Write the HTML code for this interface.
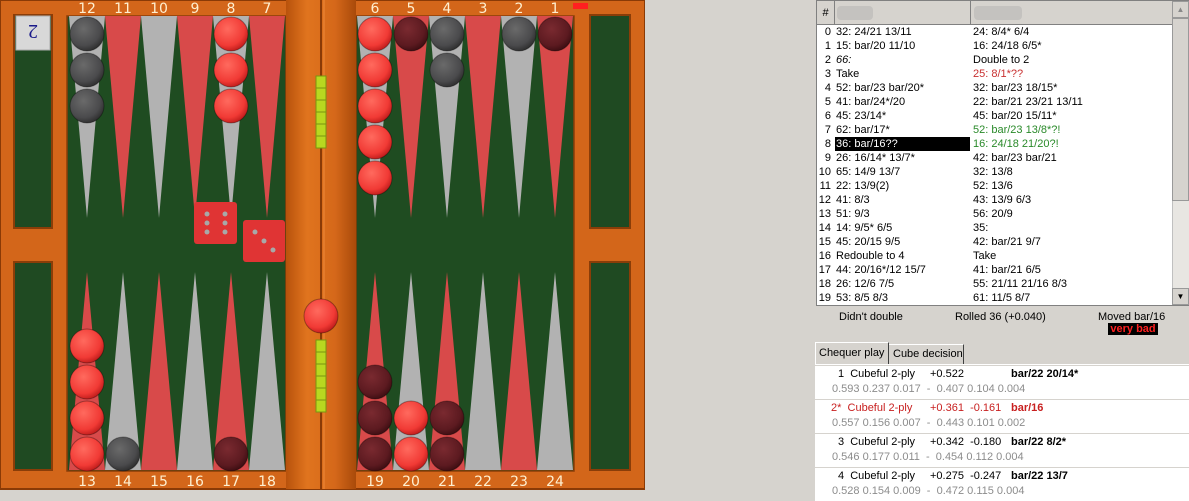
<!DOCTYPE html>
<html><head><meta charset="utf-8"><style>
body{margin:0;width:1189px;height:496px;background:#d6d3ce;position:relative;overflow:hidden;font-family:"Liberation Sans",Tahoma,sans-serif;font-size:11px;color:#000}
.abs{position:absolute}
#list{left:816px;top:0;width:373px;height:306px;background:#fff;border:1px solid #808080;box-sizing:border-box}
.hdr{position:absolute;top:0;height:24px;background:#d6d3ce;border-right:1px solid #808080;border-bottom:1px solid #808080;box-sizing:border-box}
.row{position:absolute;height:14px;line-height:14px;white-space:nowrap;width:356px}
.row .n{position:absolute;left:0;width:15px;text-align:right}
.blur{position:absolute;top:5px;height:14px;background:#c4c2bf;border-radius:4px}
.ar{position:absolute;left:0;width:100%;height:33px;background:#fff}
.l{position:absolute;white-space:nowrap;line-height:13px}
.g{color:#8c8c8c}
</style></head><body>
<svg class="abs" style="left:0;top:0" width="645" height="496" viewBox="0 0 645 496">
<defs>
<radialGradient id="rc" cx="0.4" cy="0.35" r="0.7"><stop offset="0" stop-color="#ff6a5e"/><stop offset="0.7" stop-color="#f13a35"/><stop offset="1" stop-color="#b81818"/></radialGradient>
<radialGradient id="gc" cx="0.4" cy="0.35" r="0.7"><stop offset="0" stop-color="#6a6a6a"/><stop offset="0.7" stop-color="#4a4a4c"/><stop offset="1" stop-color="#2a2a2a"/></radialGradient>
<radialGradient id="dc" cx="0.4" cy="0.35" r="0.7"><stop offset="0" stop-color="#7a2a30"/><stop offset="0.7" stop-color="#5c1a20"/><stop offset="1" stop-color="#380c10"/></radialGradient>
<linearGradient id="wood" x1="0" y1="0" x2="1" y2="0"><stop offset="0" stop-color="#b8520c"/><stop offset="0.3" stop-color="#e0741e"/><stop offset="0.7" stop-color="#d5681a"/><stop offset="1" stop-color="#a94a0a"/></linearGradient>
</defs>
<rect x="0" y="0" width="645" height="489" fill="#d3661a"/>
<rect x="0" y="0" width="645" height="489" fill="none" stroke="#8a3a06" stroke-width="2"/>
<rect x="14" y="15" width="38" height="213" fill="#1f4a22" stroke="#8a3d08" stroke-width="2"/>
<rect x="14" y="262" width="38" height="208" fill="#1f4a22" stroke="#8a3d08" stroke-width="2"/>
<rect x="590" y="15" width="40" height="213" fill="#1f4a22" stroke="#8a3d08" stroke-width="2"/>
<rect x="590" y="262" width="40" height="208" fill="#1f4a22" stroke="#8a3d08" stroke-width="2"/>
<rect x="67" y="16" width="219" height="455" fill="#1f4c21" stroke="#8a3d08" stroke-width="1.5"/>
<rect x="356" y="16" width="218" height="455" fill="#1f4c21" stroke="#8a3d08" stroke-width="1.5"/>
<rect x="286" y="0" width="70" height="489" fill="url(#wood)"/>
<line x1="321" y1="0" x2="321" y2="489" stroke="#8a3a06" stroke-width="2"/>
<line x1="324" y1="0" x2="324" y2="489" stroke="#f08a3a" stroke-width="1"/>
<rect x="316" y="76" width="10" height="72" fill="#b8d820" stroke="#7a9410"/>
<rect x="316" y="340" width="10" height="72" fill="#b8d820" stroke="#7a9410"/>
<g stroke="#7a9410"><line x1="316" y1="88" x2="326" y2="88"/><line x1="316" y1="100" x2="326" y2="100"/><line x1="316" y1="112" x2="326" y2="112"/><line x1="316" y1="124" x2="326" y2="124"/><line x1="316" y1="136" x2="326" y2="136"/><line x1="316" y1="352" x2="326" y2="352"/><line x1="316" y1="364" x2="326" y2="364"/><line x1="316" y1="376" x2="326" y2="376"/><line x1="316" y1="388" x2="326" y2="388"/><line x1="316" y1="400" x2="326" y2="400"/></g>
<g>
<polygon points="69,16 105,16 87,218" fill="#b2b2b2"/>
<polygon points="105,16 141,16 123,218" fill="#d84a4a"/>
<polygon points="141,16 177,16 159,218" fill="#b2b2b2"/>
<polygon points="177,16 213,16 195,218" fill="#d84a4a"/>
<polygon points="213,16 249,16 231,218" fill="#b2b2b2"/>
<polygon points="249,16 285,16 267,218" fill="#d84a4a"/>
<polygon points="357,16 393,16 375,218" fill="#b2b2b2"/>
<polygon points="393,16 429,16 411,218" fill="#d84a4a"/>
<polygon points="429,16 465,16 447,218" fill="#b2b2b2"/>
<polygon points="465,16 501,16 483,218" fill="#d84a4a"/>
<polygon points="501,16 537,16 519,218" fill="#b2b2b2"/>
<polygon points="537,16 573,16 555,218" fill="#d84a4a"/>
<polygon points="69,470 105,470 87,272" fill="#d84a4a"/>
<polygon points="105,470 141,470 123,272" fill="#b2b2b2"/>
<polygon points="141,470 177,470 159,272" fill="#d84a4a"/>
<polygon points="177,470 213,470 195,272" fill="#b2b2b2"/>
<polygon points="213,470 249,470 231,272" fill="#d84a4a"/>
<polygon points="249,470 285,470 267,272" fill="#b2b2b2"/>
<polygon points="357,470 393,470 375,272" fill="#d84a4a"/>
<polygon points="393,470 429,470 411,272" fill="#b2b2b2"/>
<polygon points="429,470 465,470 447,272" fill="#d84a4a"/>
<polygon points="465,470 501,470 483,272" fill="#b2b2b2"/>
<polygon points="501,470 537,470 519,272" fill="#d84a4a"/>
<polygon points="537,470 573,470 555,272" fill="#b2b2b2"/>
</g>
<rect x="573" y="3" width="15" height="6" fill="#ff2020"/>
<rect x="16" y="16" width="34" height="34" fill="#d8d8d8" stroke="#aaa"/>
<text x="33" y="41" font-size="20" fill="#1a1a8a" text-anchor="middle" transform="rotate(180 33 33)" font-family="Liberation Serif,serif">2</text>
<g stroke="#00000055" stroke-width="1">
<circle cx="87" cy="34" r="17" fill="url(#gc)"/><circle cx="87" cy="70" r="17" fill="url(#gc)"/><circle cx="87" cy="106" r="17" fill="url(#gc)"/>
<circle cx="231" cy="34" r="17" fill="url(#rc)"/><circle cx="231" cy="70" r="17" fill="url(#rc)"/><circle cx="231" cy="106" r="17" fill="url(#rc)"/>
<circle cx="375" cy="34" r="17" fill="url(#rc)"/><circle cx="375" cy="70" r="17" fill="url(#rc)"/><circle cx="375" cy="106" r="17" fill="url(#rc)"/><circle cx="375" cy="142" r="17" fill="url(#rc)"/><circle cx="375" cy="178" r="17" fill="url(#rc)"/>
<circle cx="411" cy="34" r="17" fill="url(#dc)"/>
<circle cx="447" cy="34" r="17" fill="url(#gc)"/><circle cx="447" cy="70" r="17" fill="url(#gc)"/>
<circle cx="519" cy="34" r="17" fill="url(#gc)"/>
<circle cx="555" cy="34" r="17" fill="url(#dc)"/>
<circle cx="87" cy="454" r="17" fill="url(#rc)"/><circle cx="87" cy="418" r="17" fill="url(#rc)"/><circle cx="87" cy="382" r="17" fill="url(#rc)"/><circle cx="87" cy="346" r="17" fill="url(#rc)"/>
<circle cx="123" cy="454" r="17" fill="url(#gc)"/>
<circle cx="231" cy="454" r="17" fill="url(#dc)"/>
<circle cx="375" cy="454" r="17" fill="url(#dc)"/><circle cx="375" cy="418" r="17" fill="url(#dc)"/><circle cx="375" cy="382" r="17" fill="url(#dc)"/>
<circle cx="411" cy="454" r="17" fill="url(#rc)"/><circle cx="411" cy="418" r="17" fill="url(#rc)"/>
<circle cx="447" cy="454" r="17" fill="url(#dc)"/><circle cx="447" cy="418" r="17" fill="url(#dc)"/>
<circle cx="321" cy="316" r="17" fill="url(#rc)"/>
</g>
<rect x="194" y="202" width="43" height="42" fill="#e03434" rx="3"/>
<g fill="#a8a8a8"><circle cx="207" cy="214" r="2.5"/><circle cx="225" cy="214" r="2.5"/><circle cx="207" cy="223" r="2.5"/><circle cx="225" cy="223" r="2.5"/><circle cx="207" cy="232" r="2.5"/><circle cx="225" cy="232" r="2.5"/></g>
<rect x="243" y="220" width="42" height="42" fill="#e03434" rx="3"/>
<g fill="#a8a8a8"><circle cx="255" cy="232" r="2.5"/><circle cx="264" cy="241" r="2.5"/><circle cx="273" cy="250" r="2.5"/></g>
<g fill="#fff0d0" font-size="14" text-anchor="middle" font-family="DejaVu Sans,sans-serif">
<text x="87" y="13">12</text><text x="123" y="13">11</text><text x="159" y="13">10</text><text x="195" y="13">9</text><text x="231" y="13">8</text><text x="267" y="13">7</text>
<text x="375" y="13">6</text><text x="411" y="13">5</text><text x="447" y="13">4</text><text x="483" y="13">3</text><text x="519" y="13">2</text><text x="555" y="13">1</text>
<text x="87" y="486">13</text><text x="123" y="486">14</text><text x="159" y="486">15</text><text x="195" y="486">16</text><text x="231" y="486">17</text><text x="267" y="486">18</text>
<text x="375" y="486">19</text><text x="411" y="486">20</text><text x="447" y="486">21</text><text x="483" y="486">22</text><text x="519" y="486">23</text><text x="555" y="486">24</text>
</g>
</svg>

<div id="list" class="abs">
 <div class="hdr" style="left:0;width:18px;text-align:center;line-height:24px">#</div>
 <div class="hdr" style="left:18px;width:136px"><div class="blur" style="left:2px;width:36px"></div></div>
 <div class="hdr" style="left:154px;width:202px"><div class="blur" style="left:3px;width:48px"></div></div>
 <div class="abs" style="left:355px;top:0;width:17px;height:304px;background:#e8e6e2;border-left:1px solid #c0c0c0"></div>
 <div class="abs" style="left:355px;top:0;width:17px;height:17px;background:#d6d3ce;border:1px solid #999;box-sizing:border-box;font-size:8px;text-align:center;line-height:15px;color:#888">▲</div>
 <div class="abs" style="left:355px;top:17px;width:17px;height:183px;background:#d6d3ce;border:1px solid #999;box-sizing:border-box"></div>
 <div class="abs" style="left:355px;top:287px;width:17px;height:17px;background:#d6d3ce;border:1px solid #999;box-sizing:border-box;font-size:8px;text-align:center;line-height:15px">▼</div>
</div>
<div class="abs" style="left:816px;top:25px;width:355px;height:280px;overflow:hidden">
<div class="row" style="top:0"><span class="n">0</span><span style="position:absolute;left:20px">32: 24/21 13/11</span><span style="position:absolute;left:157px">24: 8/4* 6/4</span></div>
<div class="row" style="top:14px"><span class="n">1</span><span style="position:absolute;left:20px">15: bar/20 11/10</span><span style="position:absolute;left:157px">16: 24/18 6/5*</span></div>
<div class="row" style="top:28px"><span class="n">2</span><span style="position:absolute;left:20px;font-style:italic">66:</span><span style="position:absolute;left:157px">Double to 2</span></div>
<div class="row" style="top:42px"><span class="n">3</span><span style="position:absolute;left:20px">Take</span><span style="position:absolute;left:157px;color:#c83030">25: 8/1*??</span></div>
<div class="row" style="top:56px"><span class="n">4</span><span style="position:absolute;left:20px">52: bar/23 bar/20*</span><span style="position:absolute;left:157px">32: bar/23 18/15*</span></div>
<div class="row" style="top:70px"><span class="n">5</span><span style="position:absolute;left:20px">41: bar/24*/20</span><span style="position:absolute;left:157px">22: bar/21 23/21 13/11</span></div>
<div class="row" style="top:84px"><span class="n">6</span><span style="position:absolute;left:20px">45: 23/14*</span><span style="position:absolute;left:157px">45: bar/20 15/11*</span></div>
<div class="row" style="top:98px"><span class="n">7</span><span style="position:absolute;left:20px">62: bar/17*</span><span style="position:absolute;left:157px;color:#2a8a2a">52: bar/23 13/8*?!</span></div>
<div class="row" style="top:112px"><span class="n">8</span><span style="position:absolute;left:19px;width:134px;background:#000;color:#fff;padding-left:1px">36: bar/16??</span><span style="position:absolute;left:157px;color:#2a8a2a">16: 24/18 21/20?!</span></div>
<div class="row" style="top:126px"><span class="n">9</span><span style="position:absolute;left:20px">26: 16/14* 13/7*</span><span style="position:absolute;left:157px">42: bar/23 bar/21</span></div>
<div class="row" style="top:140px"><span class="n">10</span><span style="position:absolute;left:20px">65: 14/9 13/7</span><span style="position:absolute;left:157px">32: 13/8</span></div>
<div class="row" style="top:154px"><span class="n">11</span><span style="position:absolute;left:20px">22: 13/9(2)</span><span style="position:absolute;left:157px">52: 13/6</span></div>
<div class="row" style="top:168px"><span class="n">12</span><span style="position:absolute;left:20px">41: 8/3</span><span style="position:absolute;left:157px">43: 13/9 6/3</span></div>
<div class="row" style="top:182px"><span class="n">13</span><span style="position:absolute;left:20px">51: 9/3</span><span style="position:absolute;left:157px">56: 20/9</span></div>
<div class="row" style="top:196px"><span class="n">14</span><span style="position:absolute;left:20px">14: 9/5* 6/5</span><span style="position:absolute;left:157px">35:</span></div>
<div class="row" style="top:210px"><span class="n">15</span><span style="position:absolute;left:20px">45: 20/15 9/5</span><span style="position:absolute;left:157px">42: bar/21 9/7</span></div>
<div class="row" style="top:224px"><span class="n">16</span><span style="position:absolute;left:20px">Redouble to 4</span><span style="position:absolute;left:157px">Take</span></div>
<div class="row" style="top:238px"><span class="n">17</span><span style="position:absolute;left:20px">44: 20/16*/12 15/7</span><span style="position:absolute;left:157px">41: bar/21 6/5</span></div>
<div class="row" style="top:252px"><span class="n">18</span><span style="position:absolute;left:20px">26: 12/6 7/5</span><span style="position:absolute;left:157px">55: 21/11 21/16 8/3</span></div>
<div class="row" style="top:266px"><span class="n">19</span><span style="position:absolute;left:20px">53: 8/5 8/3</span><span style="position:absolute;left:157px">61: 11/5 8/7</span></div>
</div>

<div class="l" style="left:839px;top:311px">Didn't double</div>
<div class="l" style="left:955px;top:311px">Rolled 36 (+0.040)</div>
<div class="l" style="left:1098px;top:311px">Moved bar/16</div>
<div class="l" style="left:1108px;top:323px;width:50px;height:12px;line-height:12px;background:#000;color:#ff2020;font-weight:bold;text-align:center">very bad</div>

<div class="abs" style="left:815px;top:342px;width:74px;height:22px;background:#d6d3ce;border:1px solid #fff;border-right:1px solid #404040;border-bottom:none;box-sizing:border-box;line-height:20px;padding-left:3px">Chequer play</div>
<div class="abs" style="left:889px;top:344px;width:75px;height:20px;border-top:1px solid #fff;border-right:1px solid #404040;box-sizing:border-box;line-height:19px;padding-left:4px">Cube decision</div>
<div class="abs" style="left:815px;top:364px;width:374px;height:132px;background:#d6d3ce;border-top:1px solid #fff">
 <div class="ar" style="top:1px"></div>
 <div class="ar" style="top:35px"></div>
 <div class="ar" style="top:69px"></div>
 <div class="ar" style="top:103px"></div>
</div>
<div class="l" style="left:838px;top:368px">1&nbsp;&nbsp;Cubeful 2-ply</div><div class="l" style="left:930px;top:368px">+0.522</div><div class="l" style="left:1011px;top:368px;font-weight:bold">bar/22 20/14*</div>
<div class="l g" style="left:832px;top:383px">0.593&nbsp;0.237&nbsp;0.017&nbsp;&nbsp;-&nbsp;&nbsp;0.407&nbsp;0.104&nbsp;0.004</div>
<div class="l" style="left:831px;top:402px;color:#c82020">2*&nbsp;&nbsp;Cubeful 2-ply</div><div class="l" style="left:930px;top:402px;color:#c82020">+0.361&nbsp;&nbsp;-0.161</div><div class="l" style="left:1011px;top:402px;font-weight:bold;color:#c82020">bar/16</div>
<div class="l g" style="left:832px;top:417px">0.557&nbsp;0.156&nbsp;0.007&nbsp;&nbsp;-&nbsp;&nbsp;0.443&nbsp;0.101&nbsp;0.002</div>
<div class="l" style="left:838px;top:436px">3&nbsp;&nbsp;Cubeful 2-ply</div><div class="l" style="left:930px;top:436px">+0.342&nbsp;&nbsp;-0.180</div><div class="l" style="left:1011px;top:436px;font-weight:bold">bar/22 8/2*</div>
<div class="l g" style="left:832px;top:451px">0.546&nbsp;0.177&nbsp;0.011&nbsp;&nbsp;-&nbsp;&nbsp;0.454&nbsp;0.112&nbsp;0.004</div>
<div class="l" style="left:838px;top:470px">4&nbsp;&nbsp;Cubeful 2-ply</div><div class="l" style="left:930px;top:470px">+0.275&nbsp;&nbsp;-0.247</div><div class="l" style="left:1011px;top:470px;font-weight:bold">bar/22 13/7</div>
<div class="l g" style="left:832px;top:485px">0.528&nbsp;0.154&nbsp;0.009&nbsp;&nbsp;-&nbsp;&nbsp;0.472&nbsp;0.115&nbsp;0.004</div>
</body></html>
